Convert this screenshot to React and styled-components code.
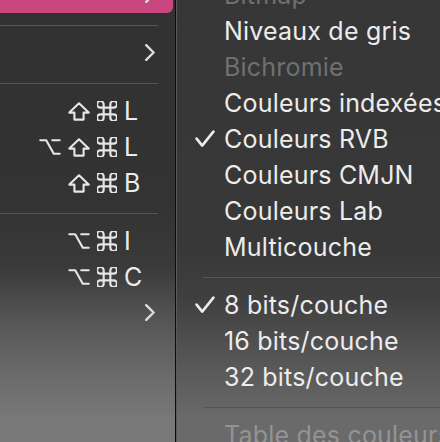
import React from "react";
import styled, { createGlobalStyle } from "styled-components";

const Global = createGlobalStyle`
  html, body { margin: 0; padding: 0; background: #333; }
  body { width: 440px; height: 442px; overflow: hidden; }
  #root { width: 440px; height: 442px; }
`;

const Screen = styled.div`
  display: flex;
  width: 440px;
  height: 442px;
  overflow: hidden;
  font-family: Inter, "Noto Sans", "DejaVu Sans", sans-serif;
  color: #ececec;
`;

const LeftPanel = styled.div`
  width: 175px;
  flex: none;
  border-right: 1px solid #0c0c0c;
  background: linear-gradient(
    to bottom,
    #313131 0px,
    #333333 230px,
    #3a3a3a 290px,
    #565656 345px,
    #6b6b6b 400px,
    #787878 442px
  );
  display: flex;
  flex-direction: column;
  margin-top: -23px;
`;

const RightPanel = styled.div`
  flex: 1;
  border-left: 1px solid #5a5a5a;
  background: linear-gradient(
    to bottom,
    #363636 0px,
    #383838 270px,
    #3f3f3f 320px,
    #535353 375px,
    #6a6a6a 442px
  );
  display: flex;
  flex-direction: column;
  margin-top: -23px;
`;

const LeftRow = styled.div`
  height: 36px;
  flex: none;
  display: flex;
  align-items: center;
  justify-content: flex-end;
  margin-right: ${(p) => (p.$active ? "2px" : "0")};
  padding-right: ${(p) => (p.$active ? "18px" : "20px")};
  border-radius: ${(p) => (p.$active ? "0 6px 6px 0" : "0")};
  background: ${(p) => (p.$active ? "#c9467f" : "transparent")};
`;

const Separator = styled.div`
  flex: none;
  height: 1px;
  margin: 11.5px ${(p) => p.$right || 0}px 9.5px ${(p) => p.$left || 0}px;
  background: #555555;
`;

const Shortcut = styled.div`
  display: flex;
  align-items: center;
  font-size: 25px;
  letter-spacing: 0.2px;
  line-height: 36px;
`;

const Mods = styled.div`
  display: flex;
  align-items: center;
  justify-content: flex-end;
  margin-right: 6px;
`;

const Mod = styled.span`
  display: inline-flex;
  align-items: center;
  justify-content: center;
  width: 22px;
  height: 36px;
  margin-left: 6.5px;
`;

const Key = styled.span`
  display: inline-block;
  width: 31px;
  text-align: left;
`;

const stroke = {
  fill: "none",
  stroke: "#e6e6e6",
  strokeWidth: 2.1,
  strokeLinecap: "round",
  strokeLinejoin: "round",
};

const ShiftIcon = () => (
  <svg width="22" height="19" viewBox="0 0 22 19">
    <polygon
      points="11,1.3 20.7,10.6 15.6,10.6 15.6,17.6 6.4,17.6 6.4,10.6 1.3,10.6"
      {...stroke}
    />
  </svg>
);

const CmdIcon = () => (
  <svg width="20" height="20" viewBox="3 3 18 18">
    <path
      d="M15 6v12a3 3 0 1 0 3-3H6a3 3 0 1 0 3 3V6a3 3 0 1 0-3 3h12a3 3 0 1 0-3-3"
      {...stroke}
      strokeWidth={1.95}
    />
  </svg>
);

const OptIcon = () => (
  <svg width="22" height="18" viewBox="0 0 22 18">
    <path d="M1.3 2.2H7.2L14.8 15.8H20.7M13.2 2.2H20.7" {...stroke} />
  </svg>
);

const modIcons = { shift: ShiftIcon, cmd: CmdIcon, opt: OptIcon };

const Chevron = () => (
  <svg width="10" height="17" viewBox="0 0 10 17">
    <polyline
      points="1.2,1.2 8.6,8.5 1.2,15.8"
      fill="none"
      stroke="#dcdcdc"
      strokeWidth="2.4"
      strokeLinecap="round"
      strokeLinejoin="round"
    />
  </svg>
);

const ChevronSlot = styled.div`
  display: flex;
  align-items: center;
  margin-top: -2px;
`;

const ItemRow = styled.div`
  height: 36px;
  flex: none;
  display: flex;
  align-items: center;
  white-space: nowrap;
`;

const CheckCol = styled.div`
  width: 47px;
  flex: none;
  display: flex;
  align-items: center;
  padding-left: 18px;
  box-sizing: border-box;
`;

const Label = styled.span`
  font-size: 25px;
  letter-spacing: 0.2px;
  line-height: 36px;
  color: ${(p) => (p.$disabled ? "rgba(255,255,255,0.3)" : "#ececec")};
`;

const Check = () => (
  <svg width="20" height="18" viewBox="0 0 20 18">
    <polyline
      points="1.6,8.6 7.2,15.6 18.4,1.6"
      fill="none"
      stroke="#ededed"
      strokeWidth="2.6"
      strokeLinecap="round"
      strokeLinejoin="round"
    />
  </svg>
);

const leftItems = [
  { type: "active" },
  { type: "sep" },
  { type: "sub" },
  { type: "sep" },
  { type: "key", mods: ["shift", "cmd"], key: "L" },
  { type: "key", mods: ["opt", "shift", "cmd"], key: "L" },
  { type: "key", mods: ["shift", "cmd"], key: "B" },
  { type: "sep" },
  { type: "key", mods: ["opt", "cmd"], key: "I" },
  { type: "key", mods: ["opt", "cmd"], key: "C" },
  { type: "sub" },
];

const rightItems = [
  { label: "Bitmap", disabled: true },
  { label: "Niveaux de gris" },
  { label: "Bichromie", disabled: true },
  { label: "Couleurs indexées" },
  { label: "Couleurs RVB", checked: true },
  { label: "Couleurs CMJN" },
  { label: "Couleurs Lab" },
  { label: "Multicouche" },
  { sep: true },
  { label: "8 bits/couche", checked: true },
  { label: "16 bits/couche" },
  { label: "32 bits/couche" },
  { sep: true },
  { label: "Table des couleurs", disabled: true },
];

export default function App() {
  return (
    <>
      <Global />
      <Screen>
        <LeftPanel>
          {leftItems.map((it, i) => {
            if (it.type === "sep") return <Separator key={i} $right={17} />;
            if (it.type === "active" || it.type === "sub")
              return (
                <LeftRow key={i} $active={it.type === "active"}>
                  <ChevronSlot>
                    <Chevron />
                  </ChevronSlot>
                </LeftRow>
              );
            return (
              <LeftRow key={i}>
                <Shortcut>
                  <Mods>
                    {it.mods.map((m, j) => {
                      const Icon = modIcons[m];
                      return (
                        <Mod key={j}>
                          <Icon />
                        </Mod>
                      );
                    })}
                  </Mods>
                  <Key>{it.key}</Key>
                </Shortcut>
              </LeftRow>
            );
          })}
        </LeftPanel>
        <RightPanel>
          {rightItems.map((it, i) =>
            it.sep ? (
              <Separator key={i} $left={26} />
            ) : (
              <ItemRow key={i}>
                <CheckCol>{it.checked && <Check />}</CheckCol>
                <Label $disabled={it.disabled}>{it.label}</Label>
              </ItemRow>
            )
          )}
        </RightPanel>
      </Screen>
    </>
  );
}
